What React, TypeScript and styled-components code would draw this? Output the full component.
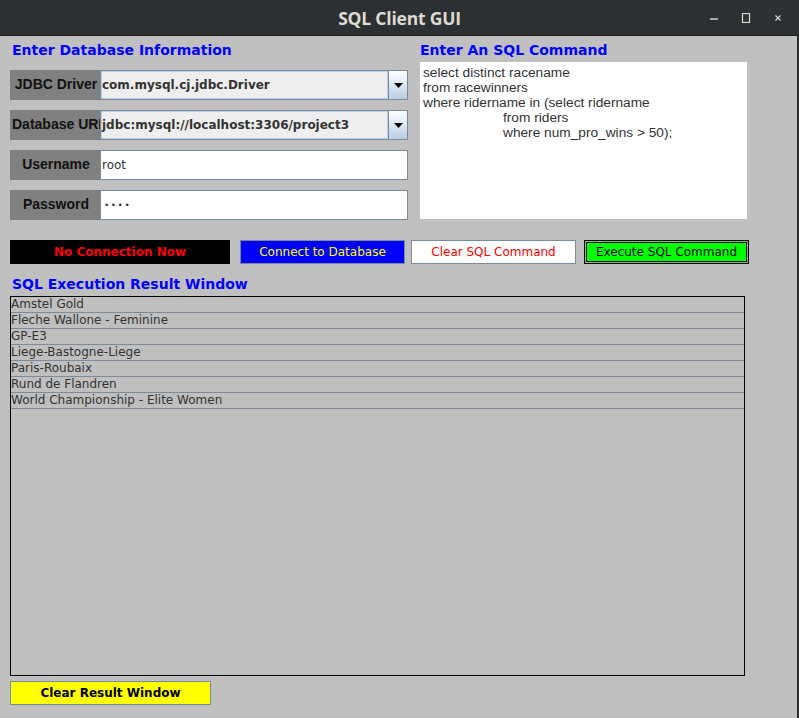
import React from 'react';
import styled, { createGlobalStyle } from 'styled-components';

const GlobalStyle = createGlobalStyle`
  html, body {
    margin: 0;
    padding: 0;
    background: #c0c0c0;
  }
  body {
    font-family: "DejaVu Sans", sans-serif;
  }
  * {
    box-sizing: border-box;
  }
`;

const Frame = styled.div`
  width: 799px;
  height: 718px;
  display: flex;
  flex-direction: column;
  overflow: hidden;
  background: #c0c0c0;
`;

const TitleBar = styled.header`
  height: 36px;
  flex-shrink: 0;
  background: #2d3033;
  border-bottom: 1px solid #1c1e20;
  display: grid;
  grid-template-columns: 1fr auto 1fr;
  align-items: center;
`;

const Title = styled.div`
  grid-column: 2;
  color: #dfdbd2;
  font-family: "Open Sans", sans-serif;
  font-weight: 700;
  font-size: 17.5px;
  letter-spacing: -0.2px;
`;

const WindowControls = styled.div`
  justify-self: end;
  display: flex;
  align-items: center;
  gap: 14px;
  padding-right: 12px;
`;

const ControlButton = styled.div`
  width: 18px;
  height: 18px;
  display: flex;
  align-items: center;
  justify-content: center;
`;

const Body = styled.main`
  flex: 1;
  padding: 4px 0 0 10px;
  border-right: 2px solid #2a2c2e;
  display: flex;
  flex-direction: column;
`;

const TopSection = styled.section`
  display: flex;
  align-items: flex-start;
`;

const Panel = styled.div<{ $w: number; $ml?: number }>`
  width: ${(p) => p.$w}px;
  margin-left: ${(p) => p.$ml ?? 0}px;
  display: flex;
  flex-direction: column;
`;

const Heading = styled.h2<{ $pad?: number }>`
  margin: 0;
  height: 20px;
  line-height: 20px;
  padding-left: ${(p) => p.$pad ?? 2}px;
  font-size: 14px;
  font-weight: 700;
  color: #0000ff;
  white-space: nowrap;
`;

const Form = styled.div`
  margin-top: 10px;
  display: flex;
  flex-direction: column;
  gap: 10px;
`;

const FieldRow = styled.div`
  display: flex;
  height: 30px;
`;

const FieldLabel = styled.label`
  width: 90px;
  flex-shrink: 0;
  background: #808080;
  color: #111;
  font-family: "Liberation Sans", Arial, sans-serif;
  font-weight: 700;
  font-size: 14px;
  line-height: 28px;
  text-align: center;
  padding-left: 2px;
  white-space: nowrap;
  overflow: hidden;
`;

const Combo = styled.div`
  flex: 1;
  display: flex;
  border: 1px solid #7a8a99;
`;

const ComboValue = styled.div`
  flex: 1;
  background: #eeeeee;
  border: 1px solid #b8cfe5;
  color: #333;
  font-weight: 700;
  font-size: 12px;
  display: flex;
  align-items: center;
`;

const ComboArrow = styled.div`
  width: 19px;
  border-left: 1px solid #7a8a99;
  background: linear-gradient(#ffffff, #b8cfe5);
  display: flex;
  align-items: center;
  justify-content: center;
`;

const TextField = styled.div`
  flex: 1;
  background: #ffffff;
  border: 1px solid #7a8a99;
  color: #333;
  font-size: 12px;
  padding-left: 1px;
  display: flex;
  align-items: center;
`;

const Dots = styled.span`
  font-size: 9px;
  letter-spacing: 1.5px;
  color: #333;
  padding-left: 2px;
`;

const SqlArea = styled.div`
  margin-top: 2px;
  height: 157px;
  background: #ffffff;
  padding: 3px 3px;
  font-family: "Liberation Sans", Arial, sans-serif;
  font-size: 13.7px;
  line-height: 15px;
  color: #333;
`;

const SqlLine = styled.div<{ $indent?: number }>`
  padding-left: ${(p) => p.$indent ?? 0}px;
  white-space: pre;
`;

const ButtonRow = styled.div`
  margin-top: 20px;
  height: 24px;
  display: flex;
`;

const StatusBox = styled.div`
  width: 220px;
  background: #000000;
  color: #ff0000;
  font-weight: 700;
  font-size: 12px;
  display: flex;
  align-items: center;
  justify-content: center;
`;

const ActionButton = styled.button<{
  $bg: string;
  $fg: string;
  $w: number;
  $ml?: number;
  $bold?: boolean;
  $focused?: boolean;
}>`
  width: ${(p) => p.$w}px;
  margin-left: ${(p) => p.$ml ?? 0}px;
  height: 24px;
  padding: 0;
  background: ${(p) => p.$bg};
  color: ${(p) => p.$fg};
  font-family: "DejaVu Sans", sans-serif;
  font-size: 12px;
  font-weight: ${(p) => (p.$bold ? 700 : 400)};
  border: 1px solid ${(p) => (p.$focused ? '#000000' : '#7a8a99')};
  box-shadow: ${(p) => (p.$focused ? 'inset 0 0 0 1px #7fc07f, inset 0 0 0 2px #000' : 'none')};
  display: flex;
  align-items: center;
  justify-content: center;
`;

const ResultHeading = styled(Heading)`
  margin-top: 10px;
`;

const ResultTable = styled.div`
  margin-top: 2px;
  width: 735px;
  height: 380px;
  border: 1px solid #000000;
  display: flex;
  flex-direction: column;
`;

const ResultRow = styled.div`
  height: 16px;
  flex-shrink: 0;
  border-bottom: 1px solid #808a94;
  font-size: 12px;
  line-height: 15px;
  color: #333;
  white-space: nowrap;
`;

const ClearButton = styled(ActionButton)`
  margin-top: 5px;
`;

const races = [
  'Amstel Gold',
  'Fleche Wallone - Feminine',
  'GP-E3',
  'Liege-Bastogne-Liege',
  'Paris-Roubaix',
  'Rund de Flandren',
  'World Championship - Elite Women',
];

const sqlLines: { text: string; indent?: number }[] = [
  { text: 'select distinct racename' },
  { text: 'from racewinners' },
  { text: 'where ridername in (select ridername' },
  { text: 'from riders', indent: 80 },
  { text: 'where num_pro_wins > 50);', indent: 80 },
];

const Arrow = () => (
  <svg width="9" height="5" viewBox="0 0 9 5">
    <path d="M0 0 H9 L4.5 5 Z" fill="#000" />
  </svg>
);

function App() {
  return (
    <Frame>
      <GlobalStyle />
      <TitleBar>
        <Title>SQL Client GUI</Title>
        <WindowControls>
          <ControlButton>
            <svg width="10" height="10" viewBox="0 0 10 10">
              <path d="M1 6 H9" stroke="#dfdbd2" strokeWidth="1.4" />
            </svg>
          </ControlButton>
          <ControlButton>
            <svg width="10" height="10" viewBox="0 0 10 10">
              <rect x="1.5" y="0.5" width="7" height="9" fill="none" stroke="#dfdbd2" strokeWidth="1.2" />
            </svg>
          </ControlButton>
          <ControlButton>
            <svg width="10" height="10" viewBox="0 0 10 10">
              <path d="M2.5 2.5 L7.5 7.5 M7.5 2.5 L2.5 7.5" stroke="#dfdbd2" strokeWidth="1.1" />
            </svg>
          </ControlButton>
        </WindowControls>
      </TitleBar>
      <Body>
        <TopSection>
          <Panel $w={398}>
            <Heading>Enter Database Information</Heading>
            <Form>
              <FieldRow>
                <FieldLabel>JDBC Driver</FieldLabel>
                <Combo>
                  <ComboValue>com.mysql.cj.jdbc.Driver</ComboValue>
                  <ComboArrow>
                    <Arrow />
                  </ComboArrow>
                </Combo>
              </FieldRow>
              <FieldRow>
                <FieldLabel>Database URL</FieldLabel>
                <Combo>
                  <ComboValue>jdbc:mysql://localhost:3306/project3</ComboValue>
                  <ComboArrow>
                    <Arrow />
                  </ComboArrow>
                </Combo>
              </FieldRow>
              <FieldRow>
                <FieldLabel>Username</FieldLabel>
                <TextField>root</TextField>
              </FieldRow>
              <FieldRow>
                <FieldLabel>Password</FieldLabel>
                <TextField>
                  <Dots>••••</Dots>
                </TextField>
              </FieldRow>
            </Form>
          </Panel>
          <Panel $w={327} $ml={12}>
            <Heading $pad={0}>Enter An SQL Command</Heading>
            <SqlArea>
              {sqlLines.map((line, i) => (
                <SqlLine key={i} $indent={line.indent}>
                  {line.text}
                </SqlLine>
              ))}
            </SqlArea>
          </Panel>
        </TopSection>
        <ButtonRow>
          <StatusBox>No Connection Now</StatusBox>
          <ActionButton $bg="#0000ff" $fg="#ffff00" $w={165} $ml={10}>
            Connect to Database
          </ActionButton>
          <ActionButton $bg="#ffffff" $fg="#ff0000" $w={165} $ml={6}>
            Clear SQL Command
          </ActionButton>
          <ActionButton $bg="#00ff00" $fg="#000000" $w={165} $ml={8} $focused>
            Execute SQL Command
          </ActionButton>
        </ButtonRow>
        <ResultHeading>SQL Execution Result Window</ResultHeading>
        <ResultTable>
          {races.map((race) => (
            <ResultRow key={race}>{race}</ResultRow>
          ))}
        </ResultTable>
        <ClearButton $bg="#ffff00" $fg="#000000" $w={201} $bold>
          Clear Result Window
        </ClearButton>
      </Body>
    </Frame>
  );
}

export default App;
